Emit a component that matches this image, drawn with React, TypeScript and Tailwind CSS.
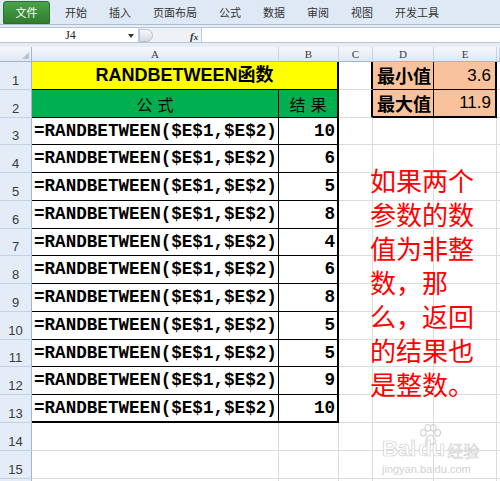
import React from "react";

const rowH = [28, 28, 27, 28, 28, 28, 27, 28, 28, 28, 27, 28, 28, 28, 28, 4];
const results = [10, 6, 5, 8, 4, 6, 8, 5, 5, 9, 10];

const mono = { fontFamily: '"Liberation Mono", monospace' } as React.CSSProperties;
const cjk = { fontFamily: '"Noto Sans CJK SC", sans-serif' } as React.CSSProperties;
const sansCjk = { fontFamily: '"Liberation Sans", "Noto Sans CJK SC", sans-serif' } as React.CSSProperties;
const serif = { fontFamily: '"Liberation Serif", serif' } as React.CSSProperties;

function Cell({ w, className = "", children, style }: { w: number; className?: string; children?: React.ReactNode; style?: React.CSSProperties }) {
  return (
    <div className={"box-border shrink-0 flex items-center overflow-visible whitespace-nowrap " + className} style={{ width: w, ...style }}>
      {children}
    </div>
  );
}

export default function App() {
  const tabs = ["开始", "插入", "页面布局", "公式", "数据", "审阅", "视图", "开发工具"];
  return (
    <div className="w-[500px] h-[481px] overflow-hidden bg-white relative" style={sansCjk}>
      {/* Ribbon tabs */}
      <div className="h-[25px] bg-[#dfe9f5] border-b border-[#a9bcd5] flex items-end pl-[3px]">
        <div className="w-[47px] h-[23px] rounded-t-[3px] bg-gradient-to-b from-[#4aa34a] to-[#2e7d2e] border border-[#2a6e2a] flex items-center justify-center text-white text-[11px]" style={cjk}>
          文件
        </div>
        <div className="flex items-center h-[23px] ml-[15px] gap-[22px] text-[#333] text-[11px]" style={cjk}>
          {tabs.map((t) => (
            <span key={t}>{t}</span>
          ))}
        </div>
      </div>
      {/* Formula bar */}
      <div className="h-[22px] bg-[#e8edf4] flex pt-[2px]">
        <div className="h-[16px] flex w-full border-y border-[#b5c4d8] bg-white">
          <div className="w-[135px] ml-[3px] relative flex items-center justify-center text-[12px] text-[#222]" style={serif}>
            J4
            <div className="absolute right-[4px] top-[6px] w-0 h-0 border-l-[3px] border-r-[3px] border-t-[4px] border-l-transparent border-r-transparent border-t-[#333]" />
          </div>
          <div className="w-[64px] bg-[#eef2f7] border-l border-r border-[#c3cfdf] relative flex items-center">
            <div className="absolute left-[0px] top-[1px] w-[14px] h-[13px] rounded-r-full bg-gradient-to-b from-[#f7f9fc] to-[#d3dbe6] border border-[#b7c3d3]" />
            <span className="absolute left-[51px] top-[0px] text-[11px] italic font-bold text-[#333]" style={serif}>
              f<span className="text-[9px]">x</span>
            </span>
          </div>
          <div className="flex-1 bg-white" />
        </div>
      </div>
      {/* Column headers */}
      <div className="flex h-[15px] text-[11px] text-[#3a3a3a]" style={serif}>
        <div className="w-[32px] box-border border-r border-b border-[#9eb6ce] bg-gradient-to-b from-[#f5f8fc] to-[#e1e8f2] relative">
          <div className="absolute right-[2px] bottom-[2px] w-0 h-0" style={{ borderBottom: "7px solid #b9c3cf", borderLeft: "7px solid transparent" }} />
        </div>
        {[["A", 247], ["B", 60], ["C", 34], ["D", 61], ["E", 63], ["", 3]].map(([l, w]) => (
          <div key={String(l)} className="box-border border-r border-b border-[#c5d2e3] border-b-[#9eb6ce] bg-gradient-to-b from-[#f5f8fc] to-[#e1e8f2] flex items-center justify-center leading-none" style={{ width: Number(w) }}>
            {l}
          </div>
        ))}
      </div>
      {/* Rows */}
      {rowH.map((h, i) => {
        const r = i + 1;
        const inTable = r <= 13;
        const last = r === 13;
        return (
          <div key={r} className="flex" style={{ height: h }}>
            <Cell w={32} className="justify-center items-end pb-[2px] bg-[#e4ecf7] border-r border-b border-r-[#9eb6ce] border-b-[#c5d2e3] text-[13px] text-[#3a3a3a] leading-none">
              {r <= 15 ? r : ""}
            </Cell>
            {r === 1 && (
              <Cell w={307} className="justify-center bg-[#ffff00] border-r-2 border-b border-black text-[18px] font-bold text-black">
                RANDBETWEEN函数
              </Cell>
            )}
            {r === 2 && (
              <>
                <Cell w={247} className="justify-center bg-[#00b050] border-r border-b border-black text-[16px] text-black tracking-[5px] pl-[5px]" style={cjk}>
                  公式
                </Cell>
                <Cell w={60} className="justify-center bg-[#00b050] border-r-2 border-b border-black text-[16px] text-black tracking-[5px] pl-[5px]" style={cjk}>
                  结果
                </Cell>
              </>
            )}
            {r >= 3 && inTable && (
              <>
                <Cell w={247} className={"pl-[2px] border-r border-black text-[17.6px] font-bold text-black " + (last ? "border-b-2" : "border-b")} style={mono}>
                  =RANDBETWEEN($E$1,$E$2)
                </Cell>
                <Cell w={60} className={"justify-end pr-[2px] border-r-2 border-black text-[17.6px] font-bold text-black " + (last ? "border-b-2" : "border-b")} style={mono}>
                  {results[r - 3]}
                </Cell>
              </>
            )}
            {!inTable && (
              <>
                <Cell w={247} className="border-r border-b border-[#dadcdd]" />
                <Cell w={60} className="border-r border-b border-[#dadcdd]" />
              </>
            )}
            <Cell w={34} className={"border-b border-b-[#dadcdd] " + (r <= 2 ? "border-r-2 border-r-black" : "border-r border-r-[#dadcdd]")} />
            {r <= 2 ? (
              <>
                <Cell w={61} className={"pl-[4px] bg-[#f8c39c] border-r border-black text-[18px] font-bold text-black " + (r === 2 ? "border-b-2" : "border-b")} style={cjk}>
                  {r === 1 ? "最小值" : "最大值"}
                </Cell>
                <Cell w={63} className={"justify-end pr-[4px] bg-[#f8c39c] border-r-2 border-black text-[17px] text-black " + (r === 2 ? "border-b-2" : "border-b")} style={{ fontFamily: '"Liberation Sans", sans-serif' }}>
                  {r === 1 ? "3.6" : "11.9"}
                </Cell>
              </>
            ) : (
              <>
                <Cell w={61} className="border-r border-b border-[#dadcdd]" />
                <Cell w={63} className="border-r border-b border-[#dadcdd]" />
              </>
            )}
            <Cell w={10} className="border-b border-[#dadcdd]" />
          </div>
        );
      })}

      {/* Red note text (overflowing cell text) */}
      <div className="absolute left-[370px] top-[163px] text-[26px] leading-[34px] text-[#ff0000]" style={cjk}>
        <div>如果两个</div>
        <div>参数的数</div>
        <div>值为非整</div>
        <div>数，那</div>
        <div>么，返回</div>
        <div>的结果也</div>
        <div>是整数。</div>
      </div>

      {/* Watermark */}
      <div className="absolute left-[382px] top-[424px] flex flex-col items-start leading-none">
        <svg width="28" height="22" viewBox="0 0 24 20" className="ml-[34px]">
          <g fill="none" stroke="#d0d0d0" strokeWidth="1">
            <ellipse cx="6" cy="8" rx="2.5" ry="3" />
            <ellipse cx="10" cy="3.5" rx="2.5" ry="3" />
            <ellipse cx="15" cy="3.5" rx="2.5" ry="3" />
            <ellipse cx="19" cy="8" rx="2.5" ry="3" />
            <path d="M8 17 C8 12 11 10 12.5 10 C14 10 17 12 17 17 C15 19 10 19 8 17 Z" />
          </g>
        </svg>
        <div className="flex items-end -mt-[8px]">
          <span className="text-[22px] font-bold text-white" style={{ WebkitTextStroke: "0.7px #cfcfcf", fontFamily: '"Liberation Sans", sans-serif' }}>Bai</span>
          <span className="text-[22px] font-bold text-white ml-[2px]" style={{ WebkitTextStroke: "0.7px #cfcfcf", fontFamily: '"Liberation Sans", sans-serif' }}>du</span>
          <span className="text-[16px] text-white ml-[2px] mb-[2px]" style={{ ...cjk, WebkitTextStroke: "0.6px #cfcfcf" }}>经验</span>
        </div>
        <div className="text-[11px] mt-[4px] text-[#d2d2d2]" style={{ fontFamily: '"Liberation Sans", sans-serif' }}>jingyan.baidu.com</div>
      </div>
    </div>
  );
}
